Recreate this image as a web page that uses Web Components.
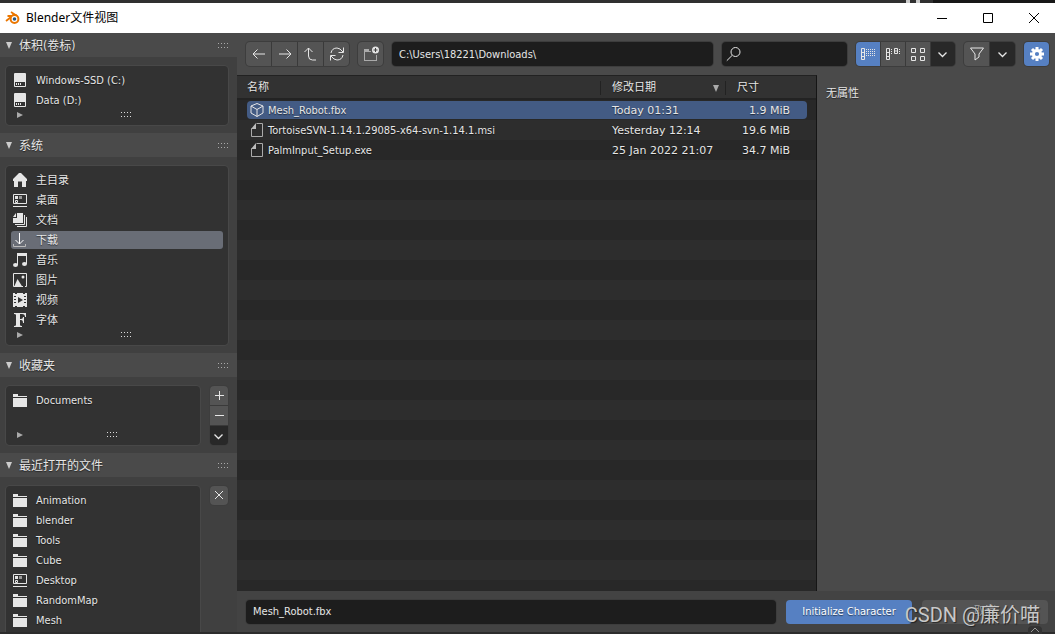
<!DOCTYPE html>
<html lang="zh-CN">
<head>
<meta charset="utf-8">
<title>Blender文件视图</title>
<style>
html, body { margin: 0; height: 100%; }
body { font: 11px/20px "DejaVu Sans Condensed", "DejaVu Sans", "Noto Sans CJK SC", sans-serif; color: #e6e6e6; background: #434343; overflow: hidden; }
</style>
</head>
<body>
<file-window></file-window>
<script>
const ICONS = {
  drive: '<path fill="#e6e6e6" d="M2 2q0-1 1-1h10q1 0 1 1v12q0 1-1 1H3q-1 0-1-1z"/><path fill="#333" d="M3 10h10v4H3z"/><path fill="#e6e6e6" d="M4 11h1v2H4zM6 11h1v2H6zM8 11h1v2H8z"/>',
  home: '<path fill="#e6e6e6" d="M7 1h2l6 6v2h-1v6h-4V9.500H6V15H2V9H1V7z"/>',
  desktop: '<path fill="none" stroke="#e6e6e6" d="M1.500 2.500h13v9h-13zM1 14.500h14"/><path fill="#e6e6e6" d="M3 4h3v3H3z"/><path fill="#999" d="M7 4h3v3H7z"/><path fill="none" stroke="#e6e6e6" d="M3.500 8.500h2v2h-2z"/>',
  docs: '<path fill="#e6e6e6" d="M5 1h6v10H1V6h4z"/><path fill="#e6e6e6" d="M4 1v4H1z"/><path fill="none" stroke="#e6e6e6" d="M12.500 3v9.500H3M14.500 5v9.500H5"/>',
  download: '<path fill="none" stroke="#fff" d="M7.500 1v11M3.500 8l4 4 4-4"/><path fill="none" stroke="#bbb" d="M1.500 12v2.500h12V12"/>',
  music: '<path fill="#e6e6e6" d="M5 1h10v11h-1V4H6v9H5z"/><ellipse cx="3.500" cy="13" rx="2.500" ry="2" fill="#e6e6e6"/><ellipse cx="12.500" cy="12" rx="2.500" ry="2" fill="#e6e6e6"/>',
  image: '<path fill="none" stroke="#e6e6e6" d="M11 14.500H1.500v-13h13v13H13"/><path fill="#e6e6e6" d="M2 15 5.500 7l5 8z"/><circle cx="11" cy="5" r="1.500" fill="#e6e6e6"/>',
  video: '<path fill="#e6e6e6" d="M1 1h2v1h2V1h6v1h2V1h2v14h-2v-1h-2v1H5v-1H3v1H1z"/><path fill="#333" d="M2 4h2v1H2zM2 7h2v1H2zM2 10h2v1H2zM12 4h2v1h-2zM12 7h2v1h-2zM12 10h2v1h-2zM6 5v6l5-3z"/>',
  font: '<path fill="#e6e6e6" d="M2 1h12v4h-1q0-3-3-3H8v5h1q2 0 2-2h1v6h-1q0-3-2-3H8v5q0 1 2 1v1H2v-1q2 0 2-1V3q0-1-2-1z"/>',
  folder: '<path fill="#e6e6e6" d="M1 2h5v2h9v1H1zM1 6h14v9H1z"/>',
  mesh: '<path fill="none" stroke="#e6e6e6" stroke-linejoin="round" d="M8 1.500 14 4v7l-6 3.500L2 11V4zM2 4l6 3.500L14 4M8 7.500v7"/>',
  file: '<path fill="none" stroke="#aaa" d="M7.500 1.500h6v13h-11v-8"/><path fill="#bbb" d="M7 1v6H2z"/>',
  back: '<path d="M14 8H2M6.500 3.500 2 8l4.500 4.500"/>',
  forward: '<path d="M2 8h12M9.500 3.500 14 8l-4.500 4.500"/>',
  up: '<path d="M1.500 6 5.500 2l4 4M5.500 2v8q0 4 4 4H13"/>',
  refresh: '<path d="M2 7q1-5 6-5 3 0 6 4M14.500 1.500v5h-5M14 9q-1 5-6 5-3 0-6-4M1.500 14.500v-5h5"/>',
  newfolder: '<path fill="#aaa" stroke="none" d="M1 3h5v2h2v1H2v8h11V9h1v6H1z"/><circle cx="12.500" cy="4" r="3.500" fill="#e6e6e6" stroke="none"/><path stroke="#444" d="M12.500 2v4M10.500 4h4"/>',
  search: '<circle cx="9.500" cy="6" r="4.500"/><path d="M6 9.500.8 14.700"/>',
  list: '<path d="M1.500 2.500h3v11h-3zM1.500 6.500h3M1.500 10.500h3"/><path stroke-dasharray="1 1" d="M6 3.500h10M6 5.500h10M6 7.500h10M6 9.500h10"/>',
  columns: '<path d="M1.500 2.500h3v11h-3zM1.500 6.500h3M1.500 10.500h3M9.500 2.500h3v5h-3zM9.500 5h3"/><path stroke-dasharray="1 1" d="M6.500 3v6M14.500 3v6"/>',
  grid: '<path d="M1.500 2.500h4v4h-4zM10.500 2.500h4v4h-4zM1.500 10.500h4v4h-4zM10.500 10.500h4v4h-4z"/>',
  down: '<path stroke-width="1.300" d="m3.500 6.500 4 4 4-4"/>',
  filter: '<path d="M1.500 2h13L10 8v3l-4 3V8z"/>',
  gear: '<path stroke="#fff" stroke-width="3" d="M8 1v2.500M8 12.500V15M1 8h2.500M12.500 8H15M3 3l2 2M11 11l2 2M13 3l-2 2M5 11l-2 2"/><circle cx="8" cy="8" r="3.600" stroke="#fff" stroke-width="3"/>',
  plus: '<path d="M8.500 3v9M4 7.500h9"/>',
  minus: '<path d="M4 7.500h9"/>',
  cross: '<path d="m4 3 8 8M12 3l-8 8"/>',
  caret: '<path d="m4 10 4-4 4 4"/>',
  winmin: '<path d="M3 8.500h10"/>',
  winmax: '<path d="M3.500 3.500h9v9h-9z"/>',
  winclose: '<path d="m3 3 10 10M13 3 3 13"/>',
  blender: '<path stroke="#ea7600" stroke-width="1.800" d="M1 11 8.500 5M2.500 6H9M6 2l6 4"/><circle cx="9.500" cy="9" r="3.900" fill="#fff" stroke="#ea7600" stroke-width="2"/><circle cx="9.500" cy="9" r="1.800" fill="#265787" stroke="none"/>'
};
const define = (name, html, setup) => {
  const template = document.createElement('template');
  template.innerHTML = '<style>*{box-sizing:border-box}button,input{font:inherit;color:inherit;margin:0;outline:0}button{padding:0}</style>' + html;
  customElements.define(name, class extends HTMLElement {
    connectedCallback() {
      if (this.shadowRoot) return;
      const content = template.content.cloneNode(true);
      if (setup) setup(this, content);
      this.attachShadow({ mode: 'open' }).append(content);
    }
  });
};

define('ui-icon', `<style>:host{display:block;width:16px;height:16px;flex:none}svg{display:block;width:100%;height:100%;overflow:visible}</style>
<svg viewBox="0 0 16 16" fill="none" stroke="currentColor" aria-hidden="true"></svg>`,
(host, root) => {
  const svg = root.querySelector('svg');
  const name = host.getAttribute('name');
  if (['drive','home','desktop','docs','download','music','image','video','font','folder','mesh','file'].includes(name)) svg.setAttribute('stroke', 'none');
  svg.innerHTML = ICONS[name];
});

define('ui-grip', `<style>:host{display:block;width:11px;height:5px;background:repeating-linear-gradient(90deg,var(--grip,#ddd) 0 1px,transparent 1px 3px);mask:linear-gradient(#000 0 1px,transparent 1px 4px,#000 4px 5px)}</style>`);

define('tool-button', `<style>
:host{display:block;width:var(--button-width,25px);height:var(--button-height,24px);flex:none}
button{width:100%;height:100%;display:grid;place-items:center;border:0;background:var(--fill,#545454);color:#e6e6e6}
:host([tone=dark]){--fill:#282828}
:host([tone=blue]){--fill:#5680c2}
</style><button type="button"><ui-icon></ui-icon></button>`,
(host, root) => {
  root.querySelector('ui-icon').setAttribute('name', host.getAttribute('icon'));
  root.querySelector('button').setAttribute('aria-label', host.getAttribute('label'));
});

define('button-group', `<style>
:host{display:flex;gap:1px;border-radius:4px;overflow:hidden;background:#3a3a3a;box-shadow:0 0 0 1px #3d3d3d;flex:none}
:host([vertical]){flex-direction:column;width:18px;--button-width:18px;--button-height:19px}
</style><slot></slot>`);

define('title-bar', `<style>
:host{display:block;background:#fff;color:#000}
.desktop{display:flex;height:3px;background:#303030}
.desktop i{width:14px;border:3px solid #ccc;border-width:0 4px;margin-left:auto}
.desktop b{width:122px;margin-left:13px;background:#171717}
header{display:flex;align-items:center;height:30px;padding:0 13px 0 5px}
h1{margin:0 auto 0 5px;font:12px/20px "Noto Sans","Noto Sans CJK SC",sans-serif}
nav{display:flex;gap:30px}
button{border:0;background:none}
</style>
<div class="desktop"><i></i><b></b></div>
<header><ui-icon name="blender"></ui-icon><h1>Blender文件视图</h1>
<nav><button aria-label="最小化"><ui-icon name="winmin"></ui-icon></button><button aria-label="最大化"><ui-icon name="winmax"></ui-icon></button><button aria-label="关闭"><ui-icon name="winclose"></ui-icon></button></nav></header>`);

define('place-item', `<style>
:host{display:block;height:20px;padding:1px 5px}
button{display:flex;align-items:center;gap:8px;width:100%;height:18px;padding-left:1px;border:0;border-radius:3px;background:none;text-align:left;text-shadow:0 1px 1px #0008;line-height:18px;white-space:nowrap}
span{padding-top:2px}
:host([selected]) button{background:#696d76}
</style><button type="button"><ui-icon></ui-icon><span><slot></slot></span></button>`,
(host, root) => root.querySelector('ui-icon').setAttribute('name', host.getAttribute('icon')));

define('place-list', `<style>
:host{display:block;flex:1;min-width:0;padding:4px 0 0;border-radius:4px;background:#323232;box-shadow:0 0 0 1px #484848}
footer{display:grid;grid-template-columns:1fr auto 1fr;align-items:center;height:15px;padding:0 11px 6px}
i{width:0;height:0;border:3px solid transparent;border-left:6px solid #aaa;border-right:0}
ui-grip{margin-left:18px}
</style><slot></slot><footer><i></i><ui-grip></ui-grip></footer>`);

define('side-panel', `<style>
:host{display:block;padding-bottom:8px}
button{display:flex;align-items:center;width:100%;height:24px;padding:0 8px 0 6px;border:0;background:#4a4a4a;font-size:12px;text-shadow:0 1px 1px #0008;text-align:left}
button::before{content:"";border:3px solid transparent;border-top:7px solid #ccc;border-bottom:0;margin-right:7px}
span{padding-top:2px}
ui-grip{margin-left:auto;--grip:#aaa}
div{display:flex;align-items:flex-start;gap:10px;padding:9px 9px 0 6px}
</style><button type="button" aria-expanded="true"><span></span><ui-grip></ui-grip></button><div><slot></slot></div>`,
(host, root) => root.querySelector('span').textContent = host.getAttribute('heading'));

define('side-bar', `<style>
:host{display:block;overflow:hidden;background:#404040;border-bottom:2px solid #2c2c2c}
.filler{height:20px}
</style>
<side-panel heading="体积(卷标)"><place-list><place-item icon="drive">Windows-SSD (C:)</place-item><place-item icon="drive">Data (D:)</place-item></place-list></side-panel>
<side-panel heading="系统"><place-list>
<place-item icon="home">主目录</place-item><place-item icon="desktop">桌面</place-item><place-item icon="docs">文档</place-item><place-item icon="download" selected>下载</place-item><place-item icon="music">音乐</place-item><place-item icon="image">图片</place-item><place-item icon="video">视频</place-item><place-item icon="font">字体</place-item></place-list></side-panel>
<side-panel heading="收藏夹"><place-list><place-item icon="folder">Documents</place-item><div class="filler"></div></place-list>
<button-group vertical><tool-button icon="plus" label="添加"></tool-button><tool-button icon="minus" label="移除"></tool-button><tool-button icon="down" label="更多" tone="dark"></tool-button></button-group></side-panel>
<side-panel heading="最近打开的文件"><place-list>
<place-item icon="folder">Animation</place-item><place-item icon="folder">blender</place-item><place-item icon="folder">Tools</place-item><place-item icon="folder">Cube</place-item><place-item icon="desktop">Desktop</place-item><place-item icon="folder">RandomMap</place-item><place-item icon="folder">Mesh</place-item><div class="filler"></div></place-list>
<button-group vertical><tool-button icon="cross" label="清除"></tool-button></button-group></side-panel>`);

define('text-field', `<style>
:host{display:flex;align-items:center;height:24px;min-width:0;border-radius:4px;background:#1d1d1d;box-shadow:0 0 0 1px #3d3d3d;padding:0 7px}
input{flex:1;min-width:0;width:0;height:22px;padding:0;border:0;background:none}
</style><slot></slot><input type="text">`,
(host, root) => {
  const input = root.querySelector('input');
  input.setAttribute('value', host.getAttribute('value') || '');
  input.setAttribute('aria-label', host.getAttribute('label'));
});

define('tool-bar', `<style>
:host{display:flex;align-items:center;gap:9px;height:42px;padding:0 6px 0 9px;background:#4a4a4a}
.path{flex:307}.search{flex:114;padding-left:4px}
.views{--button-width:24px}
</style>
<button-group><tool-button icon="back" label="后退"></tool-button><tool-button icon="forward" label="前进"></tool-button><tool-button icon="up" label="上级"></tool-button><tool-button icon="refresh" label="刷新"></tool-button></button-group>
<button-group><tool-button icon="newfolder" label="新建文件夹"></tool-button></button-group>
<text-field class="path" value="C:\\Users\\18221\\Downloads\\" label="路径"></text-field>
<text-field class="search" label="搜索"><ui-icon name="search"></ui-icon></text-field>
<button-group class="views"><tool-button icon="list" label="列表" tone="blue"></tool-button><tool-button icon="columns" label="短列表"></tool-button><tool-button icon="grid" label="缩略图"></tool-button><tool-button icon="down" label="显示设置" tone="dark"></tool-button></button-group>
<button-group><tool-button icon="filter" label="过滤"></tool-button><tool-button icon="down" label="过滤设置" tone="dark"></tool-button></button-group>
<button-group><tool-button icon="gear" label="选项" tone="blue"></tool-button></button-group>`);

define('file-table', `<style>
:host{display:block;overflow:hidden;border-right:1px solid #151515;border-top:1px solid #222;padding-right:9px;
background:linear-gradient(#323232 0 22px,#232323 22px 24px,transparent 24px),repeating-linear-gradient(#282828 0 20px,#2d2d2d 20px 40px) 0 24px}
table{width:100%;border-collapse:separate;border-spacing:0;table-layout:fixed}
th,td{padding:0;font-weight:400;text-align:left;white-space:nowrap;text-shadow:0 1px 1px #0008}
th{height:24px;line-height:24px}
th:first-child{padding-left:10px}
th span{display:flex;align-items:center;justify-content:space-between;height:14px;padding:0 6px 0 11px;border-left:1px solid #222}
th i{border:3px solid transparent;border-top:7px solid #aaa;border-bottom:0}
td{height:20px;padding:1px 0}
td div{display:flex;align-items:center;gap:3px;height:18px}
td:first-child{padding-left:10px}
td:first-child div{padding-left:2px;border-radius:4px 0 0 4px}
td:nth-child(n+2){font-family:"DejaVu Sans",sans-serif}
td:nth-child(2) div{padding-left:12px}
td:last-child div{justify-content:flex-end;padding-right:17px;border-radius:0 4px 4px 0}
td b{font-weight:400;padding-top:1px}
.selected div{background:#435b84}
.date{width:125px}.size{width:82px}
</style>
<table><colgroup><col><col class="date"><col class="size"></colgroup>
<thead><tr><th>名称</th><th><span>修改日期<i></i></span></th><th><span>尺寸</span></th></tr></thead>
<tbody>
<tr class="selected"><td><div><ui-icon name="mesh"></ui-icon><b>Mesh_Robot.fbx</b></div></td><td><div><b>Today 01:31</b></div></td><td><div><b>1.9 MiB</b></div></td></tr>
<tr><td><div><ui-icon name="file"></ui-icon><b>TortoiseSVN-1.14.1.29085-x64-svn-1.14.1.msi</b></div></td><td><div><b>Yesterday 12:14</b></div></td><td><div><b>19.6 MiB</b></div></td></tr>
<tr><td><div><ui-icon name="file"></ui-icon><b>PalmInput_Setup.exe</b></div></td><td><div><b>25 Jan 2022 21:07</b></div></td><td><div><b>34.7 MiB</b></div></td></tr>
</tbody></table>`);

define('action-bar', `<style>
:host{display:flex;align-items:center;gap:10px;height:43px;padding:0 7px 0 9px;border-bottom:2px solid #2c2c2c;background:#434343;position:relative}
text-field{flex:1}
button{width:126px;height:24px;border:0;border-radius:4px;background:#545454;text-shadow:0 1px 1px #0008}
.primary{background:#5680c2;color:#fff}
.cancel{color:#aaa}
.mark{position:absolute;right:15px;top:12px;font:20px/24px Roboto,"Noto Sans CJK SC",sans-serif;color:#c8c8c8;white-space:nowrap;text-shadow:1px 1px 1px #0008}
.tab{position:absolute;right:13px;bottom:-2px;display:flex;justify-content:center;width:14px;height:8px;overflow:hidden;border-radius:4px 4px 0 0;background:#333;color:#999}
.tab ui-icon{margin-top:-4px}
</style><text-field value="Mesh_Robot.fbx" label="文件名"></text-field>
<button type="button" class="primary">Initialize Character</button>
<button type="button" class="cancel">取消</button>
<span class="tab"><ui-icon name="caret"></ui-icon></span>
<span class="mark">CSDN @廉价喵</span>`);

define('file-window', `<style>
:host{display:grid;grid-template-rows:auto 1fr;height:100vh}
main{display:grid;grid-template-columns:237px minmax(0,1fr);min-height:0}
section{display:grid;grid-template-rows:auto 1fr auto;min-height:0}
.content{display:grid;grid-template-columns:minmax(0,580fr) minmax(0,238fr);min-height:0}
aside{padding:9px;background:#4a4a4a;text-shadow:0 1px 1px #0008}
</style><title-bar></title-bar><main><side-bar></side-bar><section><tool-bar></tool-bar><div class="content"><file-table></file-table><aside>无属性</aside></div><action-bar></action-bar></section></main>`);
</script>
</body>
</html>
